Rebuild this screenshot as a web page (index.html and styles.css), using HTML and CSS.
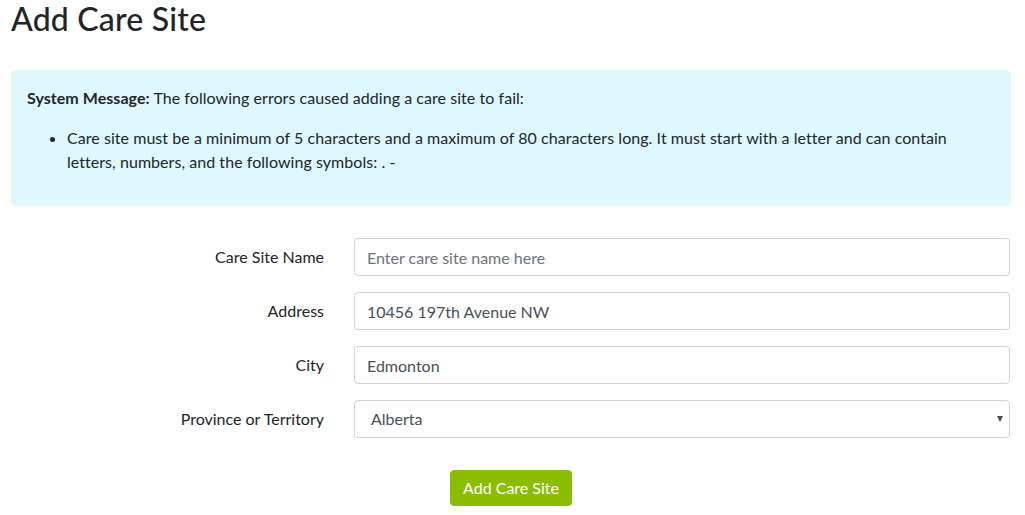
FILE: index.html
```html
<!DOCTYPE html>
<html lang="en">
<head>
<meta charset="utf-8">
<title>Add Care Site</title>
<link rel="stylesheet" href="styles.css">
</head>
<body>
<main class="page">
  <h2 class="title">Add Care Site</h2>
  <div class="alert">
    <p class="alert-lead"><strong>System Message:</strong> The following errors caused adding a care site to fail:</p>
    <ul class="alert-list">
      <li>Care site must be a minimum of 5 characters and a maximum of 80 characters long. It must start with a letter and can contain letters, numbers, and the following symbols: . -</li>
    </ul>
  </div>
  <form class="form">
    <div class="row">
      <label class="label" for="name">Care Site Name</label>
      <input class="control" id="name" type="text" placeholder="Enter care site name here">
    </div>
    <div class="row">
      <label class="label" for="address">Address</label>
      <input class="control" id="address" type="text" value="10456 197th Avenue NW">
    </div>
    <div class="row">
      <label class="label" for="city">City</label>
      <input class="control" id="city" type="text" value="Edmonton">
    </div>
    <div class="row">
      <label class="label" for="prov">Province or Territory</label>
      <div class="select-wrap">
        <select class="control select" id="prov">
          <option>Alberta</option>
        </select>
        <span class="caret"></span>
      </div>
    </div>
    <div class="actions">
      <button class="btn" type="button">Add Care Site</button>
    </div>
  </form>
</main>
</body>
</html>
```
FILE: styles.css
```css
* { box-sizing: border-box; }
html, body { margin: 0; padding: 0; background: #fff; }
body {
  font-family: "Segoe UI", Lato, "Open Sans", sans-serif;
  font-size: 16px;
  line-height: 1.5;
  color: #212529;
}
.page {
  width: 1000px;
  margin-left: 11px;
}
.title {
  margin: 0 0 32px;
  font-size: 32px;
  font-weight: 500;
  line-height: 38px;
  letter-spacing: 0.2px;
}
.alert {
  background: #dff8fd;
  border-radius: 5px;
  padding: 16px;
  margin-bottom: 32px;
  letter-spacing: 0.05px;
}
.alert-lead { margin: 0 0 16px; }
.alert-lead strong { font-weight: 700; }
.alert-list {
  margin: 0 0 16px;
  padding-left: 40px;
}
.form { display: flex; flex-direction: column; gap: 16px; }
.row {
  display: grid;
  grid-template-columns: 313px 656px;
  column-gap: 30px;
  align-items: center;
}
.label { text-align: right; }
.control {
  display: block;
  width: 100%;
  height: 38px;
  padding: 6px 12px;
  font: inherit;
  color: #495057;
  background: #fff;
  border: 1px solid #ced4da;
  border-radius: 4px;
}
.control::placeholder { color: #6c757d; opacity: 1; }
.select-wrap { position: relative; }
.select {
  appearance: none;
  -webkit-appearance: none;
  padding-left: 16px;
}
.caret {
  position: absolute;
  right: 7px;
  top: 16px;
  width: 0;
  height: 0;
  border-left: 3.5px solid transparent;
  border-right: 3.5px solid transparent;
  border-top: 6px solid #4a4a4a;
}
.actions {
  display: flex;
  justify-content: center;
  padding-top: 16px;
}
.btn {
  font: inherit;
  color: #fff;
  background: #8abd00;
  border: 1px solid #8abd00;
  border-radius: 4px;
  height: 36px;
  padding: 0 12px;
}
```
